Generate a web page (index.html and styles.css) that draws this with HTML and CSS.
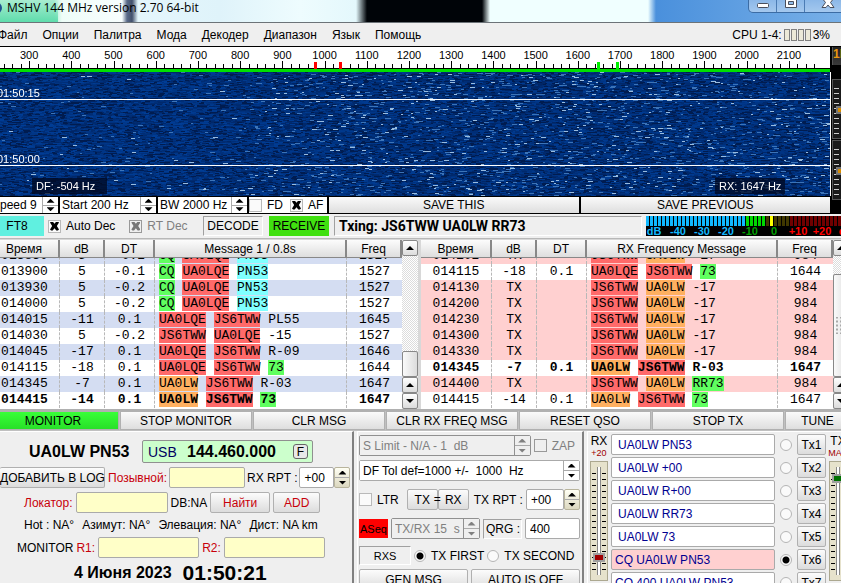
FILE: index.html
```html
<!DOCTYPE html>
<html lang="ru">
<head>
    <meta charset="UTF-8">
    <meta name="viewport" content="width=device-width, initial-scale=1.0">
    <title>MSHV 144 MHz version 2.70 64-bit</title>
    <link rel="stylesheet" href="styles.css">
</head>
<body>
    <header class="titlebar">
        <span class="app-icon"></span>
        <h1>MSHV 144 MHz version 2.70 64-bit</h1>
        <div class="window-buttons">
            <button aria-label="Minimize"><svg width="14" height="12"><rect x="1.500" y="3.500" width="11" height="4" rx="1" fill="#fff" stroke="#4a4f5c"/></svg></button>
            <button aria-label="Maximize"><svg width="14" height="12"><path d="M1.500 -1.500h11v9h-11zM4.500 1.500h5v3h-5z" fill="#fff" fill-rule="evenodd" stroke="#4a4f5c"/></svg></button>
            <button class="close" aria-label="Close"><svg width="14" height="12"><path d="M1 -2h4l2 2 2-2h4L9.500 2.500 13 7.500H9L7 5 5 7.500H1l3.500-5z" fill="#fff" stroke="#4a4f5c"/></svg></button>
        </div>
    </header>

    <nav class="menu">
        <a href="#">Файл</a>
        <a href="#">Опции</a>
        <a href="#">Палитра</a>
        <a href="#">Мода</a>
        <a href="#">Декодер</a>
        <a href="#">Диапазон</a>
        <a href="#">Язык</a>
        <a href="#">Помощь</a>
        <div class="cpu">CPU 1-4:<span class="cores"><i></i><i></i><i></i><i></i></span>3%</div>
    </nav>

    <section class="spectrum">
        <div class="spectrum-main">
            <div class="scale">
                <div class="scale-labels">
                    <span>300</span><span>400</span><span>500</span><span>600</span><span>700</span><span>800</span><span>900</span><span>1000</span><span>1100</span><span>1200</span><span>1300</span><span>1400</span><span>1500</span><span>1600</span><span>1700</span><span>1800</span><span>1900</span><span>2000</span><span>2100</span>
                </div>
                <svg class="scale-ticks" id="ticks"></svg>
            </div>
            <div class="waterfall">
                <canvas id="waterfall"></canvas>
                <span class="stamp stamp-15">01:50:15</span>
                <span class="stamp stamp-00">01:50:00</span>
                <span class="readout readout-df">DF: -504 Hz</span>
                <span class="readout readout-rx">RX: 1647 Hz</span>
            </div>
            <div class="wf-controls">
                <div class="spin spin-speed">
                    <input type="text" value="peed 9" aria-label="Speed">
                    <span class="arrows"><button aria-label="Up"></button><button aria-label="Down"></button></span>
                </div>
                <div class="spin spin-start">
                    <input type="text" value="Start 200 Hz" aria-label="Start">
                    <span class="arrows"><button aria-label="Up"></button><button aria-label="Down"></button></span>
                </div>
                <div class="spin spin-bw">
                    <input type="text" value="BW 2000 Hz" aria-label="Bandwidth">
                    <span class="arrows"><button aria-label="Up"></button><button aria-label="Down"></button></span>
                </div>
                <div class="wf-checks">
                    <label><input type="checkbox"> FD</label>
                    <label><input type="checkbox" checked> AF</label>
                </div>
                <button class="save">SAVE THIS</button>
                <button class="save">SAVE PREVIOUS</button>
            </div>
        </div>
        <aside class="levels">
            <div class="lcd">1D</div>
            <div class="level"><span></span></div>
            <div class="level"><span></span></div>
        </aside>
    </section>

    <section class="status">
        <button class="mode">FT8</button>
        <label class="auto"><input type="checkbox" checked> Auto Dec</label>
        <label class="rt"><input type="checkbox" checked disabled> RT Dec</label>
        <button class="frame decode">DECODE</button>
        <button class="receive">RECEIVE</button>
        <div class="frame txing">Txing: JS6TWW UA0LW RR73</div>
        <div class="meter">
            <div class="meter-bars"></div>
            <div class="meter-labels">
                <span>dB</span><span>-40</span><span>-30</span><span>-20</span><span class="ok">-10</span><span class="ok">0</span><span class="over">+10</span><span class="over">+20</span><span class="over">dB</span>
            </div>
        </div>
    </section>

    <section class="lists">
        <div class="list list-left">
            <div class="rows">
                <table>
                    <colgroup><col class="c-time"><col class="c-db"><col class="c-dt"><col><col class="c-freq"></colgroup>
                    <thead>
                        <tr><th>Время</th><th>dB</th><th>DT</th><th>Message 1 / 0.8s</th><th>Freq</th></tr>
                    </thead>
                    <tbody>
                        <tr class="alt"><td>013830</td><td>5</td><td>-0.2</td><td><b class="cq">CQ</b> <b class="my">UA0LQE</b> <b class="loc">PN53</b></td><td>1527</td></tr>
                        <tr><td>013900</td><td>5</td><td>-0.1</td><td><b class="cq">CQ</b> <b class="my">UA0LQE</b> <b class="loc">PN53</b></td><td>1527</td></tr>
                        <tr class="alt"><td>013930</td><td>5</td><td>-0.2</td><td><b class="cq">CQ</b> <b class="my">UA0LQE</b> <b class="loc">PN53</b></td><td>1527</td></tr>
                        <tr><td>014000</td><td>5</td><td>-0.2</td><td><b class="cq">CQ</b> <b class="my">UA0LQE</b> <b class="loc">PN53</b></td><td>1527</td></tr>
                        <tr class="alt"><td>014015</td><td>-11</td><td>0.1</td><td><b class="my">UA0LQE</b> <b class="my">JS6TWW</b> PL55</td><td>1645</td></tr>
                        <tr><td>014030</td><td>5</td><td>-0.2</td><td><b class="my">JS6TWW</b> <b class="my">UA0LQE</b> -15</td><td>1527</td></tr>
                        <tr class="alt"><td>014045</td><td>-17</td><td>0.1</td><td><b class="my">UA0LQE</b> <b class="my">JS6TWW</b> R-09</td><td>1646</td></tr>
                        <tr><td>014115</td><td>-18</td><td>0.1</td><td><b class="my">UA0LQE</b> <b class="my">JS6TWW</b> <b class="cq">73</b></td><td>1644</td></tr>
                        <tr class="alt"><td>014345</td><td>-7</td><td>0.1</td><td><b class="own">UA0LW</b> <b class="my">JS6TWW</b> R-03</td><td>1647</td></tr>
                        <tr class="strong"><td>014415</td><td>-14</td><td>0.1</td><td><b class="own">UA0LW</b> <b class="my">JS6TWW</b> <b class="cq">73</b></td><td>1647</td></tr>
                    </tbody>
                </table>
            </div>
            <div class="scrollbar">
                <button aria-label="Scroll up"></button>
                <div class="track"><div class="thumb"></div></div>
                <button aria-label="Page up"></button>
                <button class="down" aria-label="Scroll down"></button>
            </div>
        </div>
        <div class="list list-right">
            <div class="rows">
                <table>
                    <colgroup><col class="c-time"><col class="c-db"><col class="c-dt"><col><col class="c-freq"></colgroup>
                    <thead>
                        <tr><th>Время</th><th>dB</th><th>DT</th><th>RX Frequency Message</th><th>Freq</th></tr>
                    </thead>
                    <tbody>
                        <tr class="tx"><td>014102</td><td>TX</td><td></td><td><b class="my">JS6TWW</b> <b class="own">UA0LW</b> -17</td><td>984</td></tr>
                        <tr><td>014115</td><td>-18</td><td>0.1</td><td><b class="my">UA0LQE</b> <b class="my">JS6TWW</b> <b class="cq">73</b></td><td>1644</td></tr>
                        <tr class="tx"><td>014130</td><td>TX</td><td></td><td><b class="my">JS6TWW</b> <b class="own">UA0LW</b> -17</td><td>984</td></tr>
                        <tr class="tx"><td>014200</td><td>TX</td><td></td><td><b class="my">JS6TWW</b> <b class="own">UA0LW</b> -17</td><td>984</td></tr>
                        <tr class="tx"><td>014230</td><td>TX</td><td></td><td><b class="my">JS6TWW</b> <b class="own">UA0LW</b> -17</td><td>984</td></tr>
                        <tr class="tx"><td>014300</td><td>TX</td><td></td><td><b class="my">JS6TWW</b> <b class="own">UA0LW</b> -17</td><td>984</td></tr>
                        <tr class="tx"><td>014330</td><td>TX</td><td></td><td><b class="my">JS6TWW</b> <b class="own">UA0LW</b> -17</td><td>984</td></tr>
                        <tr class="strong"><td>014345</td><td>-7</td><td>0.1</td><td><b class="own">UA0LW</b> <b class="my">JS6TWW</b> R-03</td><td>1647</td></tr>
                        <tr class="tx"><td>014400</td><td>TX</td><td></td><td><b class="my">JS6TWW</b> <b class="own">UA0LW</b> <b class="cq">RR73</b></td><td>984</td></tr>
                        <tr><td>014415</td><td>-14</td><td>0.1</td><td><b class="own">UA0LW</b> <b class="my">JS6TWW</b> <b class="cq">73</b></td><td>1647</td></tr>
                    </tbody>
                </table>
            </div>
            <div class="scrollbar">
                <button aria-label="Scroll up"></button>
                <div class="track"><div class="thumb tall"></div></div>
                <button aria-label="Page up"></button>
                <button class="down" aria-label="Scroll down"></button>
            </div>
        </div>
    </section>

    <section class="actions">
        <button class="active">MONITOR</button>
        <button>STOP MONITOR</button>
        <button>CLR MSG</button>
        <button>CLR RX FREQ MSG</button>
        <button>RESET QSO</button>
        <button>STOP TX</button>
        <button class="tune">TUNE</button>
    </section>

    <main class="panels">
        <section class="panel station">
            <div class="line line-freq">
                <strong class="call">UA0LW PN53</strong>
                <div class="freq"><span>USB</span><strong>144.460.000</strong><button>F</button></div>
            </div>
            <div class="line line-call">
                <button class="btn btn-log">ДОБАВИТЬ В LOG</button>
                <label class="red" for="callsign">Позывной:</label>
                <input class="field yellow w-call" id="callsign" type="text">
                <label for="rx-rpt">RX RPT :</label>
                <div class="spin cream">
                    <input class="field" id="rx-rpt" type="text" value="+00">
                    <span class="arrows"><button aria-label="Up"></button><button aria-label="Down"></button></span>
                </div>
            </div>
            <div class="line line-loc">
                <label class="red" for="locator">Локатор:</label>
                <input class="field yellow w-loc" id="locator" type="text">
                <span>DB:NA</span>
                <button class="btn red btn-find">Найти</button>
                <button class="btn red btn-add">ADD</button>
            </div>
            <div class="line line-info">
                <span>Hot : NA°</span><span>Азимут: NA°</span><span>Элевация: NA°</span><span>Дист: NA km</span>
            </div>
            <div class="line line-mon">
                <span>MONITOR</span>
                <label class="red" for="r1">R1:</label>
                <input class="field yellow w-mon" id="r1" type="text">
                <label class="red r2" for="r2">R2:</label>
                <input class="field yellow w-mon" id="r2" type="text">
            </div>
            <div class="line line-clock">
                <strong>4 Июня 2023</strong>
                <strong class="clock">01:50:21</strong>
            </div>
        </section>

        <section class="panel settings">
            <div class="line line-limit">
                <div class="spin boxed off">
                    <input type="text" value="S Limit - N/A - 1  dB" aria-label="S Limit" disabled>
                    <span class="arrows"><button aria-label="Up" disabled></button><button aria-label="Down" disabled></button></span>
                </div>
                <label class="muted"><input type="checkbox" disabled> ZAP</label>
            </div>
            <div class="line">
                <div class="spin boxed">
                    <input type="text" value="DF Tol def=1000 +/-  1000  Hz" aria-label="DF Tol">
                    <span class="arrows"><button aria-label="Up"></button><button aria-label="Down"></button></span>
                </div>
            </div>
            <div class="line line-ltr">
                <label><input type="checkbox"> LTR</label>
                <div class="pair"><button class="btn">TX</button><span>=</span><button class="btn">RX</button></div>
                <label for="tx-rpt">TX RPT :</label>
                <div class="spin cream">
                    <input class="field" id="tx-rpt" type="text" value="+00">
                    <span class="arrows"><button aria-label="Up"></button><button aria-label="Down"></button></span>
                </div>
            </div>
            <div class="line line-qrg">
                <button class="aseq">ASeq</button>
                <div class="spin boxed off period">
                    <input type="text" value="TX/RX 15  s" aria-label="Period" disabled>
                    <span class="arrows"><button aria-label="Up" disabled></button><button aria-label="Down" disabled></button></span>
                </div>
                <label class="frame" for="qrg">QRG :</label>
                <input class="field w-qrg" id="qrg" type="text" value="400">
            </div>
            <div class="line line-first">
                <button class="frame rxs">RXS</button>
                <label><input type="radio" name="order" checked> TX FIRST</label>
                <label><input type="radio" name="order"> TX SECOND</label>
            </div>
            <div class="line line-gen">
                <button class="btn">GEN MSG</button>
                <button class="btn">AUTO IS OFF</button>
            </div>
        </section>

        <section class="panel macros">
            <div class="gain">
                <label for="rx-gain">RX</label>
                <small>+20</small>
                <input id="rx-gain" type="range" min="0" max="100" value="13">
            </div>
            <div class="messages">
                <div class="msg"><input class="field" type="text" value="UA0LW PN53" aria-label="Tx1 text"><input type="radio" name="tx" aria-label="Tx1"><button class="btn">Tx1</button></div>
                <div class="msg"><input class="field" type="text" value="UA0LW +00" aria-label="Tx2 text"><input type="radio" name="tx" aria-label="Tx2"><button class="btn">Tx2</button></div>
                <div class="msg"><input class="field" type="text" value="UA0LW R+00" aria-label="Tx3 text"><input type="radio" name="tx" aria-label="Tx3"><button class="btn">Tx3</button></div>
                <div class="msg"><input class="field" type="text" value="UA0LW RR73" aria-label="Tx4 text"><input type="radio" name="tx" aria-label="Tx4"><button class="btn">Tx4</button></div>
                <div class="msg"><input class="field" type="text" value="UA0LW 73" aria-label="Tx5 text"><input type="radio" name="tx" aria-label="Tx5"><button class="btn">Tx5</button></div>
                <div class="msg cq-line current"><input class="field" type="text" value="CQ UA0LW PN53" aria-label="Tx6 text"><input type="radio" name="tx" aria-label="Tx6" checked><button class="btn">Tx6</button></div>
                <div class="msg cq-line"><input class="field" type="text" value="CQ 400 UA0LW PN53" aria-label="Tx7 text"><input type="radio" name="tx" aria-label="Tx7"><button class="btn">Tx7</button></div>
            </div>
            <div class="gain gain-tx">
                <label for="tx-gain">TX</label>
                <small>MAX</small>
                <input class="green" id="tx-gain" type="range" min="0" max="100" value="93">
            </div>
        </section>
    </main>

    <script src="app.js"></script>
</body>
</html>
```
FILE: styles.css
```css
* {
    box-sizing: border-box;
}
body {
    margin: 0;
    height: 100vh;
    display: flex;
    flex-direction: column;
    overflow: hidden;
    background: #efefef;
    color: #000;
    font: 12px/14px "Liberation Sans", Arial, sans-serif;
}
button, input {
    font: inherit;
    color: inherit;
    margin: 0;
    padding: 0;
    border-radius: 0;
    min-width: 0;
}
button {
    border: 0;
    background: none;
    white-space: nowrap;
}
input[type="text"] {
    border: 0;
    background: #fff;
}
label, span {
    white-space: nowrap;
}
label {
    display: flex;
    align-items: center;
    gap: 5px;
}

/* check boxes and radios */
input[type="checkbox"] {
    appearance: none;
    flex: none;
    width: 13px;
    height: 13px;
    border: 1px solid #b9b9b9;
    background: #fafafa;
    display: grid;
    place-items: center;
}
input[type="checkbox"]:checked::before {
    content: "";
    width: 9px;
    height: 9px;
    background: #000;
    clip-path: polygon(0 12%, 12% 0, 30% 0, 50% 24%, 70% 0, 88% 0, 100% 12%, 76% 50%, 100% 88%, 88% 100%, 70% 100%, 50% 76%, 30% 100%, 12% 100%, 0 88%, 24% 50%);
}
input[type="checkbox"]:disabled {
    border-color: #999;
    background: #efefef;
}
input[type="checkbox"]:disabled::before {
    background: #777;
}
input[type="radio"] {
    appearance: none;
    flex: none;
    width: 12px;
    height: 12px;
    border: 1px solid #b5b5b5;
    border-radius: 50%;
    background: #fafafa;
}
input[type="radio"]:checked {
    background: radial-gradient(circle, #000 3px, #fafafa 4px);
}

/* shared parts */
.btn {
    height: 21px;
    border: 1px solid #b0b0b0;
    border-radius: 2px;
    background: linear-gradient(#fcfcfc, #dcdcdc);
}
.field {
    height: 21px;
    padding: 0 4px;
    border: 1px solid #aaa !important;
    border-radius: 2px;
}
.yellow {
    background: #ffffc8 !important;
}
.red {
    color: #c8000a;
}
.muted {
    color: #808080;
}
.frame {
    border: 1px solid;
    border-color: #a0a0a0 #fff #fff #a0a0a0;
}
.spin {
    display: flex;
}
.spin input {
    flex: 1;
    width: 0;
}
.arrows {
    flex: none;
    width: 16px;
    display: flex;
    flex-direction: column;
    background: #fff;
    border-left: 1px solid #aaa;
}
.arrows button {
    flex: 1;
    display: grid;
    place-items: center;
}
.arrows button + button {
    border-top: 1px solid #aaa;
}
.arrows button::before {
    content: "";
    width: 8px;
    height: 4px;
    background: #000;
    clip-path: polygon(50% 0, 100% 100%, 0 100%);
}
.arrows button + button::before {
    clip-path: polygon(0 0, 100% 0, 50% 100%);
}
.boxed {
    flex: 1;
    height: 21px;
    border: 1px solid #aaa;
    border-radius: 2px;
    background: #fff;
}
.boxed input {
    padding-left: 3px;
}
.off, .off input[type="text"], .off .arrows {
    background: #efefef;
    color: #808080;
    border-color: #909090;
}
.off .arrows button::before {
    background: #808080;
}
.cream .arrows {
    border: 1px solid #b8b49c;
    border-radius: 2px;
    background: linear-gradient(#fffff4, #dcd8c0);
}

/* title bar */
.titlebar {
    flex: none;
    height: 23px;
    display: flex;
    overflow: hidden;
    border-bottom: 1px solid #6c7378;
    background:
        linear-gradient(to bottom, transparent, #5fdcac) 0 0 / 58px 100% no-repeat,
        linear-gradient(to right, #a8ecd0 0, #a8ecd0 54px, #eefdf8 62px, #f8fefe 122px, #5a6a88 127px, #42506c 132px, #e4f6fc 138px, #dff3fa 220px, #eefcfe 300px, #e4f8fc 356px, #000408 367px, #000408 482px, #f0ffff 490px, #f0ffff 648px, #4a90dc 656px, #78b0e8 100%);
}
.app-icon {
    width: 12px;
    height: 12px;
    margin: 2px 0 0 -10px;
    border-radius: 50%;
    border: 2px solid #205090;
}
.titlebar h1 {
    margin: 0 auto 0 5px;
    font: 12px/16px "Open Sans", sans-serif;
}
.window-buttons {
    display: flex;
    height: 13px;
    margin-right: -10px;
    border: 1px solid #3c6ca4;
    border-top: 0;
    border-radius: 0 0 5px 5px;
    background: linear-gradient(#8cb8e8, #a4c8ee);
}
.window-buttons button {
    width: 28px;
    border-right: 1px solid #4c7cb4;
    display: flex;
    justify-content: center;
}
.window-buttons .close {
    width: 45px;
    border: 0;
}

/* menu */
.menu {
    flex: none;
    height: 24px;
    display: flex;
    align-items: center;
    gap: 15px;
    margin-left: -2px;
    border-bottom: 1px solid #000;
}
.menu a {
    color: #000;
    text-decoration: none;
}
.cpu {
    display: flex;
    align-items: center;
    margin: 0 11px 0 auto;
}
.cores {
    display: flex;
    gap: 1px;
    margin: 0 2px;
}
.cores i {
    width: 6px;
    height: 12px;
    border: 1px solid #808080;
    background: #ece9d8;
}

/* scale and waterfall */
.spectrum {
    flex: none;
    display: flex;
    background: #000;
}
.spectrum-main {
    flex: 1;
    min-width: 0;
}
.scale {
    height: 25px;
    margin-right: 1px;
    background: #fff;
    border-bottom: 3px solid #00e000;
    display: flex;
    flex-direction: column;
    justify-content: space-between;
}
.scale-labels {
    display: grid;
    grid-template-columns: repeat(19, 1fr);
    padding: 1px 20px 0 8px;
    height: 14px;
    font-size: 11px;
}
.scale-labels span {
    display: flex;
    justify-content: center;
}
.scale-ticks {
    display: block;
    width: 100%;
    height: 8px;
}
.waterfall {
    position: relative;
    height: 124px;
    border-right: 1px solid #fff;
    overflow: hidden;
    color: #fff;
    font-size: 11px;
}
.waterfall canvas {
    display: block;
    width: 100%;
    height: 100%;
}
.stamp {
    position: absolute;
    left: 0;
    width: 100%;
    height: 14px;
    text-indent: -3px;
    border-bottom: 1px solid #fff;
}
.stamp-15 {
    top: 14px;
}
.stamp-00 {
    top: 80px;
}
.readout {
    position: absolute;
    bottom: 2px;
    padding: 1px 4px;
    background: rgba(0, 8, 32, 0.75);
}
.readout-df {
    left: 32px;
    width: 75px;
}
.readout-rx {
    right: 45px;
    width: 70px;
}
.wf-controls {
    display: flex;
    gap: 2px;
    height: 18px;
    padding: 1px 0;
    margin-right: 1px;
}
.wf-controls .spin input {
    padding-left: 2px;
}
.wf-controls .spin-speed {
    width: 58px;
}
.wf-controls .spin-speed input {
    padding-left: 0;
}
.spin-start {
    width: 96px;
}
.spin-bw {
    width: 89px;
}
.wf-checks {
    display: flex;
    gap: 7px;
    width: 78px;
    background: #fff;
}
.save {
    flex: 1;
    background: linear-gradient(#fafafa, #dedede);
}

/* level strip on the right */
.levels {
    width: 10px;
    overflow: hidden;
    padding-left: 1px;
}
.lcd {
    width: 20px;
    height: 18px;
    margin-bottom: 14px;
    border-left: 1px solid #555;
    background: linear-gradient(#222, #3a3a3a);
    color: #e89810;
    font-weight: bold;
}
.level {
    width: 18px;
    height: 60px;
    margin-bottom: 1px;
    padding-top: 26px;
    border: 1px solid #555;
    background: repeating-linear-gradient(#ccc 0 1px, transparent 1px 5px) 1px 8px / 5px 46px no-repeat, #1a1a1a;
}
.level span {
    display: block;
    width: 14px;
    height: 8px;
    margin-left: 3px;
    border: 2px solid #777;
    background: #d88c00;
}

/* status line */
.status {
    flex: none;
    height: 24px;
    display: flex;
    align-items: center;
}
.mode {
    width: 44px;
    height: 20px;
    padding-right: 10px;
    background: #60f0e0;
}
.auto {
    margin-left: 4px;
}
.rt {
    margin-left: 14px;
    color: #808080;
}
.decode {
    width: 60px;
    height: 20px;
    margin-left: auto;
}
.receive {
    width: 60px;
    height: 20px;
    margin: 0 5px 0 6px;
    background: #40e010;
}
.txing {
    width: 308px;
    height: 20px;
    padding-left: 4px;
    font: bold 14px/18px Roboto, sans-serif;
}
.meter {
    width: 195px;
    height: 20px;
    margin-left: 4px;
    overflow: hidden;
    background: #000;
}
.meter-bars {
    height: 10px;
    background:
        repeating-linear-gradient(to right, transparent 0 3px, #000 3px 4px),
        linear-gradient(to right, #10b8ff 0 100px, #00d800 100px 120px, #403800 120px 124px, #ffff00 124px 127px, #403800 127px 144px, #700000 144px);
}
.meter-labels {
    display: grid;
    grid-template-columns: repeat(9, 24px);
    justify-items: center;
    margin-left: -4px;
    font-size: 11px;
    line-height: 10px;
    font-weight: bold;
    color: #10b8ff;
}
.ok {
    color: #00a000;
}
.over {
    color: #ff0000;
}

/* decode lists */
.lists {
    flex: none;
    display: grid;
    grid-template-columns: 418fr 428fr;
    gap: 3px;
    margin-right: -8px;
    padding-top: 1px;
    border-top: 1px solid #b8b8b8;
    border-bottom: 2px solid #b0b0b0;
    background: #d8d8d8;
}
.list {
    display: flex;
    min-width: 0;
}
.rows {
    flex: 1;
    height: 169px;
    display: flex;
    align-items: flex-end;
    padding-bottom: 1px;
    overflow: hidden;
    background: #fff;
}
table {
    width: 100%;
    table-layout: fixed;
    border-collapse: separate;
    border-spacing: 0;
}
.c-time { width: 71px; }
.list-left .c-time { width: 60px; }
.c-db { width: 45px; }
.c-dt { width: 50px; }
.c-freq { width: 55px; }
th {
    position: sticky;
    top: 0;
    height: 18px;
    padding: 0;
    border-right: 2px solid #888;
    border-bottom: 1px solid #888;
    background: linear-gradient(#fcfcfc, #dedede);
    font-weight: normal;
    line-height: 14px;
    white-space: nowrap;
}
td {
    height: 16px;
    padding: 0;
    border-right: 1px dashed #b8b8b8;
    font: 13px/16px "Liberation Mono", "Courier New", monospace;
    text-align: center;
    white-space: pre;
}
td:nth-child(4) {
    padding-left: 4px;
    text-align: left;
}
td:last-child {
    border-right: 0;
}
.list-left tr > :first-child {
    padding-right: 10px;
}
td b {
    font-weight: inherit;
}
.alt { background: #d4ddf2; }
.tx { background: #ffd0d0; }
.strong td { font-weight: bold; }
.cq { background: #60ff60; }
.my { background: #ff6a6a; }
.own { background: #ffb060; }
.loc { background: #80ffff; }
.scrollbar {
    width: 16px;
    display: flex;
    flex-direction: column;
    background: #e4e4e4;
}
.scrollbar button {
    height: 16px;
    border: 1px solid #888;
    border-radius: 2px;
    background: linear-gradient(#fff, #dcdcdc);
    display: grid;
    place-items: center;
}
.scrollbar button::before {
    content: "";
    width: 8px;
    height: 4px;
    background: #000;
    clip-path: polygon(50% 0, 100% 100%, 0 100%);
}
.scrollbar .down::before {
    clip-path: polygon(0 0, 100% 0, 50% 100%);
}
.track {
    flex: 1;
    display: flex;
    align-items: flex-end;
    background: repeating-conic-gradient(#fff 0 25%, #dcdcdc 0 50%) 0 0 / 2px 2px;
}
.thumb {
    width: 100%;
    height: 26px;
    border: 1px solid #888;
    border-radius: 2px;
    background: linear-gradient(to right, #fafafa, #dcdcdc);
}
.tall {
    height: 103px;
    padding: 42px 2px;
    background: radial-gradient(#aaa 1px, transparent 1px) center / 4px 4px content-box, linear-gradient(to right, #fafafa, #dcdcdc);
}

/* wide button row */
.actions {
    flex: none;
    display: flex;
    gap: 1px;
    margin: 0 -9px 0 -13px;
    padding-bottom: 1px;
    background: #c0c0c0;
}
.actions button {
    flex: 132;
    height: 19px;
    border: 1px solid #b0b0b0;
    background: linear-gradient(#fafafa, #dedede);
}
.actions .tune {
    flex: 64;
}
.actions .active {
    background: linear-gradient(#38ff38, #28e028);
}

/* bottom panels */
.panels {
    flex: 1;
    min-height: 0;
    display: flex;
    gap: 3px;
    overflow: hidden;
}
.panel {
    padding-top: 4px;
    border-left: 1px solid #fff;
    border-top: 1px solid #fff;
    border-right: 2px solid #808080;
}
.line {
    display: flex;
    align-items: center;
}
.station {
    flex: none;
    width: 354px;
    border-left: 0;
}
.call {
    width: 113px;
    font-size: 16px;
    white-space: nowrap;
}
.line-freq {
    padding: 4px 0 0 29px;
    margin-bottom: 4px;
}
.freq {
    width: 171px;
    height: 23px;
    padding: 0 4px 0 5px;
    display: flex;
    align-items: center;
    border: 1px solid #909090;
    border-radius: 2px;
    background: #ccffcc;
}
.freq span {
    width: 39px;
    color: #000060;
    font-size: 14px;
}
.freq strong {
    font-size: 16px;
}
.freq button {
    width: 15px;
    height: 15px;
    margin-left: auto;
    border: 1px solid #666;
    border-radius: 3px;
    background: #e8e8e8;
    line-height: 12px;
}
.line-call {
    gap: 2px;
    margin-bottom: 4px;
}
.btn-log {
    width: 105px;
    margin-right: 1px;
    border-left: 0;
}
.w-call { width: 76px; }
.line-call label + .spin { width: 51px; }
.w-loc { width: 92px; }
.w-mon { width: 101px; }
.line-loc {
    gap: 3px;
    padding-left: 24px;
}
.btn-find { width: 60px; }
.btn-add { width: 47px; }
.line-info {
    height: 24px;
    gap: 8px;
    padding-left: 24px;
}
.line-mon {
    gap: 3px;
    padding-left: 17px;
}
.line-clock {
    gap: 11px;
    padding: 4px 0 0 74px;
    font-size: 16px;
    line-height: 22px;
}
.clock {
    font-size: 21px;
}

.settings {
    flex: none;
    width: 227px;
    padding: 3px 2px 0 1px;
}
.settings .line {
    gap: 3px;
    margin-bottom: 4px;
}
.line-limit label {
    padding-right: 5px;
}
.settings .line-ltr {
    margin: 8px 0;
}
.pair {
    position: relative;
    display: flex;
    width: 62px;
    margin: 0 2px 0 5px;
}
.pair .btn {
    flex: 1;
}
.pair span {
    position: absolute;
    left: 27px;
    top: 3px;
}
.line-ltr .spin {
    flex: 1;
}
.settings .line-qrg {
    margin-bottom: 7px;
}
.aseq {
    width: 29px;
    height: 19px;
    background: #ff0000;
    font-size: 11px;
}
.settings .period {
    flex: none;
    width: 89px;
}
.line-qrg .frame {
    width: 39px;
    height: 20px;
    padding-left: 2px;
}
.w-qrg {
    flex: 1;
    width: 0;
}
.rxs {
    width: 52px;
    height: 19px;
    font-size: 11px;
}
.line-gen .btn {
    flex: 1;
}

.macros {
    flex: 1;
    display: flex;
    gap: 3px;
    margin-right: -6px;
    padding: 2px 0 0 2px;
    border-right: 0;
}
.gain {
    width: 18px;
    display: flex;
    flex-direction: column;
    align-items: center;
}
.gain small {
    color: #a00000;
    font-size: 9px;
    line-height: 11px;
}
.gain input {
    appearance: none;
    writing-mode: vertical-lr;
    direction: rtl;
    width: 18px;
    height: 120px;
    margin-top: 2px;
    padding: 5px 0;
    border: 1px solid #aca890;
    background:
        linear-gradient(#fff, #fff) center / 2px 108px no-repeat,
        linear-gradient(#888, #888) center / 4px 108px no-repeat,
        linear-gradient(#e6e2cc, #e6e2cc) center / 6px 108px no-repeat,
        repeating-linear-gradient(#000 0 1px, transparent 1px 6px) center 11px / 14px 97px no-repeat,
        #e6e2cc;
}
.gain input::-webkit-slider-thumb {
    appearance: none;
    width: 12px;
    height: 9px;
    border: 2px solid #a0a0a0;
    background: #a00000;
}
.gain .green::-webkit-slider-thumb {
    background: #007000;
}
.messages {
    flex: 1;
    display: flex;
    flex-direction: column;
    gap: 2px;
}
.msg {
    display: flex;
    align-items: center;
    gap: 5px;
}
.msg .field {
    flex: 1;
    width: 0;
    padding: 0 6px;
    color: #000090;
}
.cq-line .field {
    padding: 0 3px;
}
.current .field {
    background: #ffd0d0;
}
.msg .btn {
    width: 29px;
}
```
FILE: app.js
```js
// frequency scale: a tick each 20 Hz, a long one each 100 Hz
const ticks = document.getElementById('ticks');
const scaleWidth = ticks.clientWidth;
const step = (scaleWidth - 28) / 19;

function addRect(x, y, w, h, color) {
    const r = document.createElementNS('http://www.w3.org/2000/svg', 'rect');
    r.setAttribute('x', Math.round(x));
    r.setAttribute('y', y);
    r.setAttribute('width', w);
    r.setAttribute('height', h);
    r.setAttribute('fill', color);
    ticks.appendChild(r);
}

for (let i = -3; i < 94; i++) {
    const major = i % 5 === 0;
    addRect(8 + step / 2 + i * step / 5, major ? 0 : 3, 1, major ? 8 : 5, '#000');
}
addRect(0, 7, scaleWidth, 1, '#000');

const xOf = hz => 8 + step / 2 + (hz - 300) * step / 100;
addRect(xOf(976), 1, 3, 7, '#ff0000');
addRect(xOf(1033), 1, 3, 7, '#ff0000');
addRect(xOf(1645), 1, 3, 7, '#00f000');
addRect(xOf(1690), 1, 3, 7, '#00f000');

// waterfall noise
const canvas = document.getElementById('waterfall');
canvas.width = canvas.clientWidth;
canvas.height = canvas.clientHeight;
const ctx = canvas.getContext('2d');

let seed = 144460;
function rnd() {
    seed = (seed * 1664525 + 1013904223) % 4294967296;
    return seed / 4294967296;
}

for (let y = 0; y < canvas.height; y++) {
    let x = -Math.floor(rnd() * 4);
    while (x < canvas.width) {
        const len = 2 + Math.floor(rnd() * 4);
        const gain = x < 180 ? 0.15 : Math.min(1, 0.15 + (x - 180) / 200);
        const v = rnd();
        let color;
        if (v > 1 - 0.018 * gain) {
            color = '#98bce0';
        } else if (v > 1 - 0.08 * gain) {
            color = '#3c74b8';
        } else if (v < 0.2) {
            color = '#001c50';
        } else {
            color = `rgb(0, ${Math.round(30 + v * 32)}, ${Math.round(86 + v * 66)})`;
        }
        ctx.fillStyle = color;
        ctx.fillRect(x, y, len, 1);
        x += len;
    }
}
```
